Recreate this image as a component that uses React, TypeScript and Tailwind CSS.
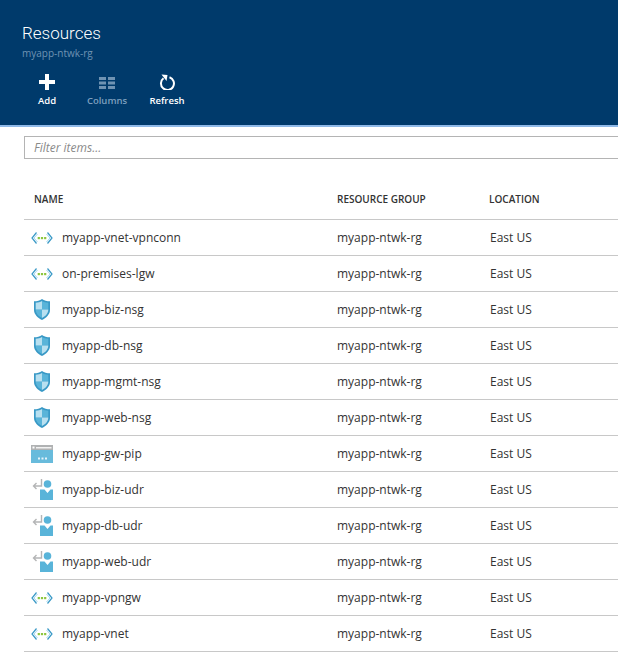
const FONT = "font-['Open_Sans','Noto_Sans',sans-serif]";

type Kind = "conn" | "nsg" | "pip" | "udr";

const ROWS: { name: string; kind: Kind }[] = [
  { name: "myapp-vnet-vpnconn", kind: "conn" },
  { name: "on-premises-lgw", kind: "conn" },
  { name: "myapp-biz-nsg", kind: "nsg" },
  { name: "myapp-db-nsg", kind: "nsg" },
  { name: "myapp-mgmt-nsg", kind: "nsg" },
  { name: "myapp-web-nsg", kind: "nsg" },
  { name: "myapp-gw-pip", kind: "pip" },
  { name: "myapp-biz-udr", kind: "udr" },
  { name: "myapp-db-udr", kind: "udr" },
  { name: "myapp-web-udr", kind: "udr" },
  { name: "myapp-vpngw", kind: "conn" },
  { name: "myapp-vnet", kind: "conn" },
];

function ConnIcon() {
  return (
    <svg width="22" height="14" viewBox="0 0 22 14" fill="none">
      <path d="M5.500 1.500 1 7l4.500 5.500M16.500 1.500 21 7l-4.500 5.500" stroke="#3999c6" strokeWidth="1.200" />
      <path d="M6.500 3 3 7l3.500 4M15.500 3 19 7l-3.500 4" stroke="#a5d8ef" strokeWidth="1" />
      <rect x="6.700" y="6" width="2.200" height="2.200" fill="#8cc63f" />
      <rect x="9.900" y="6" width="2.200" height="2.200" fill="#8cc63f" />
      <rect x="13.100" y="6" width="2.200" height="2.200" fill="#8cc63f" />
    </svg>
  );
}

function ShieldIcon() {
  return (
    <svg width="16" height="21" viewBox="0 0 16 21">
      <path d="M8 0c2 1.500 5 2.300 8 2.300V11c0 4.500-4 8-8 10-4-2-8-5.500-8-10V2.300C3 2.300 6 1.500 8 0Z" fill="#3999c6" />
      <path d="M8 2c1.800 1 3.800 1.600 6.300 1.800V10.500H8ZM8 10.500v8.500c-3.200-1.800-6.300-4.300-6.300-8.500Z" fill="#59b4d9" />
      <path d="M8 2C6.200 3 4.200 3.600 1.700 3.800V10.500H8ZM8 10.500v8.500c3.200-1.800 6.300-4.300 6.300-8.500Z" fill="#b8e0f0" />
    </svg>
  );
}

function PipIcon() {
  return (
    <svg width="22" height="18" viewBox="0 0 22 18">
      <rect width="22" height="18" fill="#68bbdc" />
      <rect width="22" height="5" fill="#b0b2b3" />
      <rect x="5" y="2" width="15.500" height="1.500" fill="#f2f2f2" />
      <rect x="1.500" y="1.500" width="2" height="2" fill="#fff" />
      <rect x="7" y="12.500" width="2" height="2" fill="#e6f4fa" />
      <rect x="10.500" y="12.500" width="2" height="2" fill="#e6f4fa" />
      <rect x="14" y="12.500" width="2" height="2" fill="#e6f4fa" />
    </svg>
  );
}

function UdrIcon() {
  return (
    <svg width="22" height="21" viewBox="0 0 22 21" fill="none">
      <path d="M10.500 0v7H2.500M5.500 4l-3 3 3 3" stroke="#b4b5b6" strokeWidth="1.400" />
      <circle cx="16.500" cy="5" r="3.800" fill="#59b4d9" />
      <path d="M9 10.500h4.500l3 3.500 3-3.500H22V21H9Z" fill="#59b4d9" />
    </svg>
  );
}

function RowIcon({ kind }: { kind: Kind }) {
  if (kind === "conn") return <ConnIcon />;
  if (kind === "nsg") return <ShieldIcon />;
  if (kind === "pip") return <PipIcon />;
  return <UdrIcon />;
}

export default function App() {
  return (
    <div className={`h-[664px] w-[618px] overflow-hidden bg-white ${FONT}`}>
      <header className="h-[127px] border-b-2 border-[#8fb9e8] bg-[#003a6b] pl-[17px] pt-[20px]">
        <h1 className="pl-[5px] font-['Roboto',sans-serif] text-[17px] font-light leading-[26px] text-white">
          Resources
        </h1>
        <p className="pl-[5px] text-[10px] leading-[14px] text-[#6f93b3]">myapp-ntwk-rg</p>
        <div className="mt-[14px] flex text-[9.500px] font-semibold leading-[14px]">
          <div className="flex w-[60px] flex-col items-center text-white">
            <svg width="16" height="16" viewBox="0 0 16 16" fill="#fff">
              <path d="M6 0h4v6h6v4h-6v6H6v-6H0V6h6Z" />
            </svg>
            <span className="mt-[4px]">Add</span>
          </div>
          <div className="flex w-[60px] flex-col items-center text-[#7d9fbe]">
            <svg width="16" height="16" viewBox="0 0 16 16" fill="#6f93b3">
              <path d="M0 3h7v3H0ZM9 3h7v3H9ZM0 7.500h7v3H0ZM9 7.500h7v3H9ZM0 12h7v3H0ZM9 12h7v3H9Z" />
            </svg>
            <span className="mt-[4px]">Columns</span>
          </div>
          <div className="flex w-[60px] flex-col items-center text-white">
            <svg width="16" height="16" viewBox="0 0 16 16" fill="none">
              <path d="M4.500 4.300A6.500 6.500 0 1 0 10.500 3.300" stroke="#fff" strokeWidth="2" />
              <path d="M2.500 0.500 8.500 1 7.500 7Z" fill="#fff" />
            </svg>
            <span className="mt-[4px]">Refresh</span>
          </div>
        </div>
      </header>

      <div className="pl-[24px] pt-[9px]">
        <div className="flex h-[23px] items-center border border-r-0 border-[#b4b4b4] pl-[9px] text-[12px] italic text-[#8a8a8a]">
          Filter items...
        </div>
        <div className="flex h-[60px] items-end pb-[13px] text-[10px] font-semibold leading-[14px] text-[#333]">
          <span className="ml-[10px] w-[303px]">NAME</span>
          <span className="w-[152px]">RESOURCE GROUP</span>
          <span>LOCATION</span>
        </div>
        {ROWS.map((row) => (
          <div
            key={row.name}
            className="flex h-[36px] items-center border-t border-[#c8c8c8] text-[12px] text-[#333]"
          >
            <span className="flex w-[35px] justify-center">
              <RowIcon kind={row.kind} />
            </span>
            <span className="ml-[3px] w-[275px]">{row.name}</span>
            <span className="w-[153px]">myapp-ntwk-rg</span>
            <span>East US</span>
          </div>
        ))}
        <div className="border-t border-[#c8c8c8]" />
      </div>
    </div>
  );
}
